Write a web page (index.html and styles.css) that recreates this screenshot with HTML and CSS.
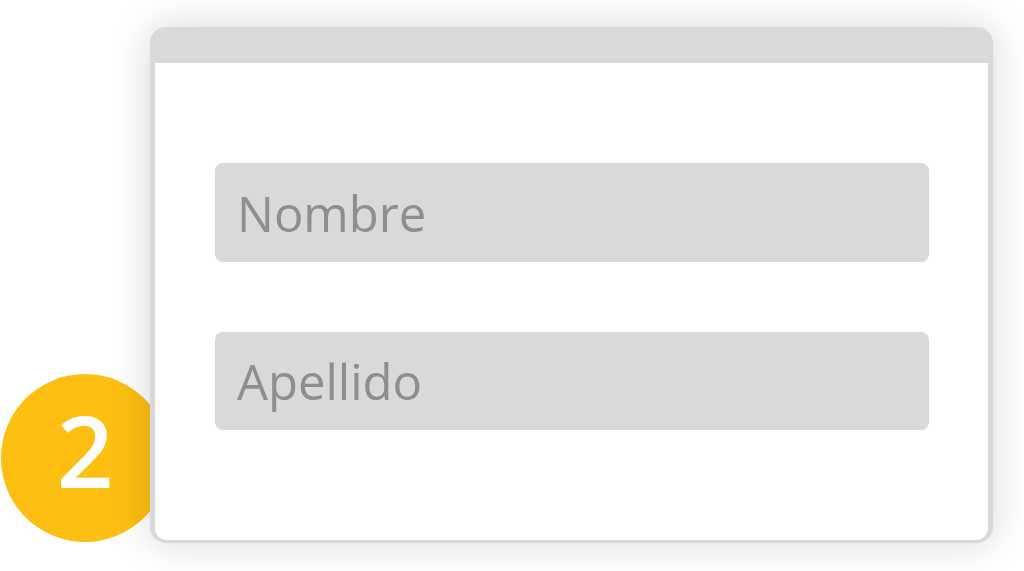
FILE: index.html
```html
<!DOCTYPE html>
<html lang="es">
<head>
  <meta charset="UTF-8" />
  <title>Paso 2 - Formulario</title>
  <link rel="stylesheet" href="styles.css">
</head>
<body>
  <div class="scene">

    <!-- NUMERO DE PASO -->
    <div class="step">2</div>

    <!-- VENTANA -->
    <div class="window">
      <div class="titlebar"></div>
      <div class="content">
        <div class="field">Nombre</div>
        <div class="field field-last">Apellido</div>
      </div>
    </div>

  </div>
</body>
</html>
```

FILE: styles.css
```css
body {
  font-family: "Open Sans", Arial, sans-serif;
  background-color: white;
  margin: 0;
  padding: 0;
}

.scene {
  position: relative;
  width: 1024px;
  height: 571px;
  overflow: hidden;
  padding: 27px 0 0 150px;
  box-sizing: border-box;
}

.step {
  position: absolute;
  left: 1px;
  top: 374px;
  width: 168px;
  height: 168px;
  border-radius: 50%;
  background-color: #fdbf12;
  color: white;
  font-size: 100px;
  font-weight: 600;
  display: flex;
  align-items: center;
  justify-content: center;
  line-height: 1;
  padding-bottom: 18px;
  box-sizing: border-box;
}

.window {
  position: relative;
  z-index: 1;
  width: 843px;
  height: 516px;
  background-color: #d9d9d9;
  border-radius: 16px;
  padding: 0 5px 3px 5px;
  box-sizing: border-box;
  display: flex;
  flex-direction: column;
  box-shadow: 0 0 40px rgba(0,0,0,0.16);
}

.titlebar {
  height: 36px;
}

.content {
  flex: 1;
  background-color: white;
  border-radius: 0 0 12px 12px;
  padding: 100px 59px 0 60px;
  display: flex;
  flex-direction: column;
  gap: 70px;
}

.field {
  height: 99px;
  background-color: #d9d9d9;
  border-radius: 8px;
  color: #8e8e8e;
  font-size: 49px;
  display: flex;
  align-items: center;
  padding-left: 22px;
}

.field-last {
  height: 98px;
}
```
